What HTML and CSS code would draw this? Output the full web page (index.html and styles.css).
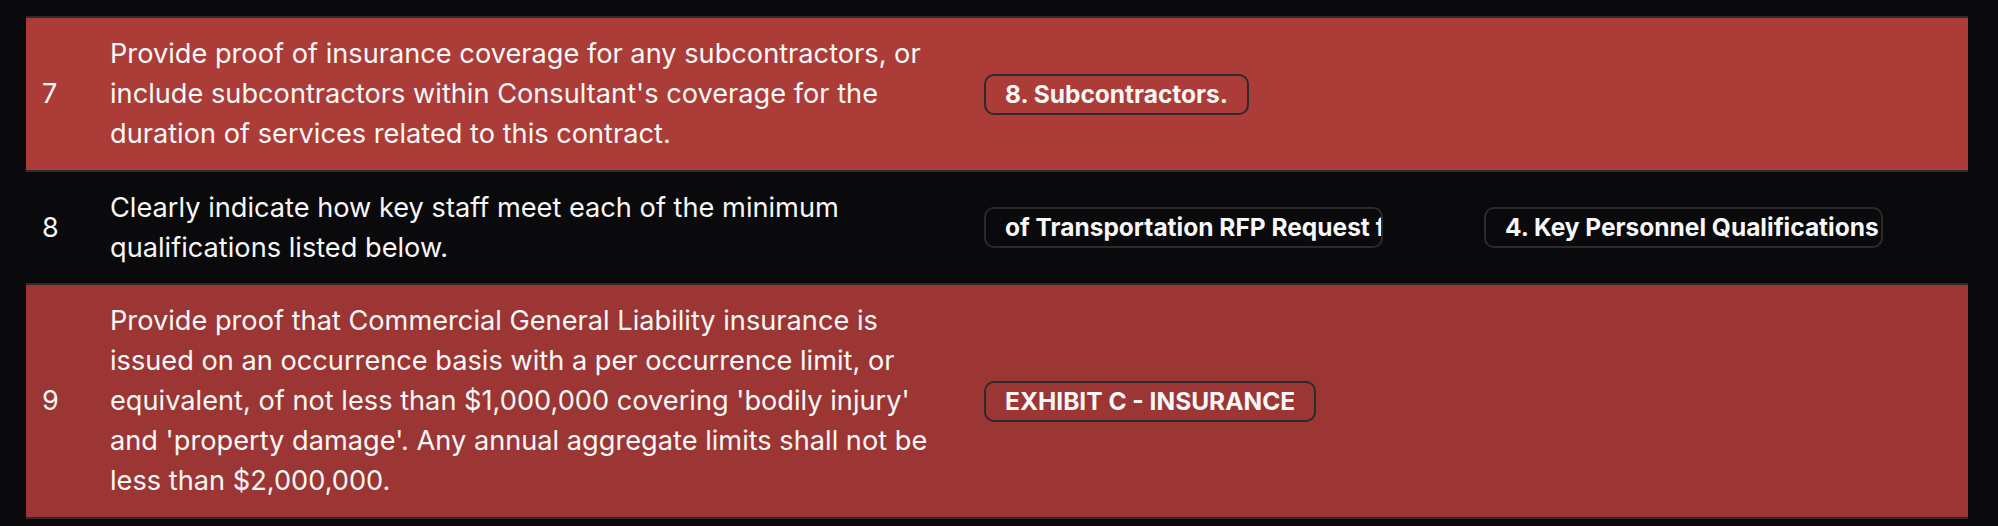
FILE: index.html
```html
<!DOCTYPE html>
<html lang="en">
<head>
<meta charset="utf-8">
<title>Requirements</title>
<link rel="stylesheet" href="styles.css">
</head>
<body>
<div class="table">
  <div class="row row-red">
    <div class="cell num">7</div>
    <div class="cell text">Provide proof of insurance coverage for any subcontractors, or include subcontractors within Consultant's coverage for the duration of services related to this contract.</div>
    <div class="cell refs"><span class="badge">8. Subcontractors.</span></div>
    <div class="cell refs"></div>
  </div>
  <div class="row row-dark">
    <div class="cell num">8</div>
    <div class="cell text">Clearly indicate how key staff meet each of the minimum qualifications listed below.</div>
    <div class="cell refs"><span class="badge badge-clip">of Transportation RFP Request for Proposals</span></div>
    <div class="cell refs"><span class="badge badge-clip">4. Key Personnel Qualifications and Experience</span></div>
  </div>
  <div class="row row-red2">
    <div class="cell num">9</div>
    <div class="cell text">Provide proof that Commercial General Liability insurance is issued on an occurrence basis with a per occurrence limit, or equivalent, of not less than $1,000,000 covering 'bodily injury' and 'property damage'. Any annual aggregate limits shall not be less than $2,000,000.</div>
    <div class="cell refs"><span class="badge">EXHIBIT C - INSURANCE</span></div>
    <div class="cell refs"></div>
  </div>
</div>
</body>
</html>
```
FILE: styles.css
```css
html, body {
  margin: 0;
  padding: 0;
  background: #0a0a0c;
}
body {
  font-family: Inter, "Noto Sans", sans-serif;
  color: #f7f7f7;
  padding: 16px 30px 0 26px;
}
.table {
  border-bottom: 2px solid #2b2b2e;
}
.row {
  display: grid;
  grid-template-columns: 68px 874px 500px 500px;
  align-items: center;
  border-top: 2px solid #2b2b2e;
}
.row-red { background: #ac3c38; }
.row-dark { background: #0a0a0c; }
.row-red2 { background: #9c3634; }
.cell {
  padding: 16px 16px 15.5px;
  min-width: 0;
}
.num {
  font-size: 27px;
  line-height: 40px;
}
.text {
  font-size: 27.2px;
  line-height: 40px;
}
.refs {
  display: flex;
}
.badge {
  display: block;
  box-sizing: border-box;
  height: 41px;
  padding: 0 19px;
  border: 2px solid #2b2b2e;
  border-radius: 10px;
  font-size: 24.5px;
  font-weight: 700;
  line-height: 37px;
  white-space: nowrap;
  overflow: hidden;
}
.badge-clip {
  width: 399px;
  padding-right: 0;
}
```
